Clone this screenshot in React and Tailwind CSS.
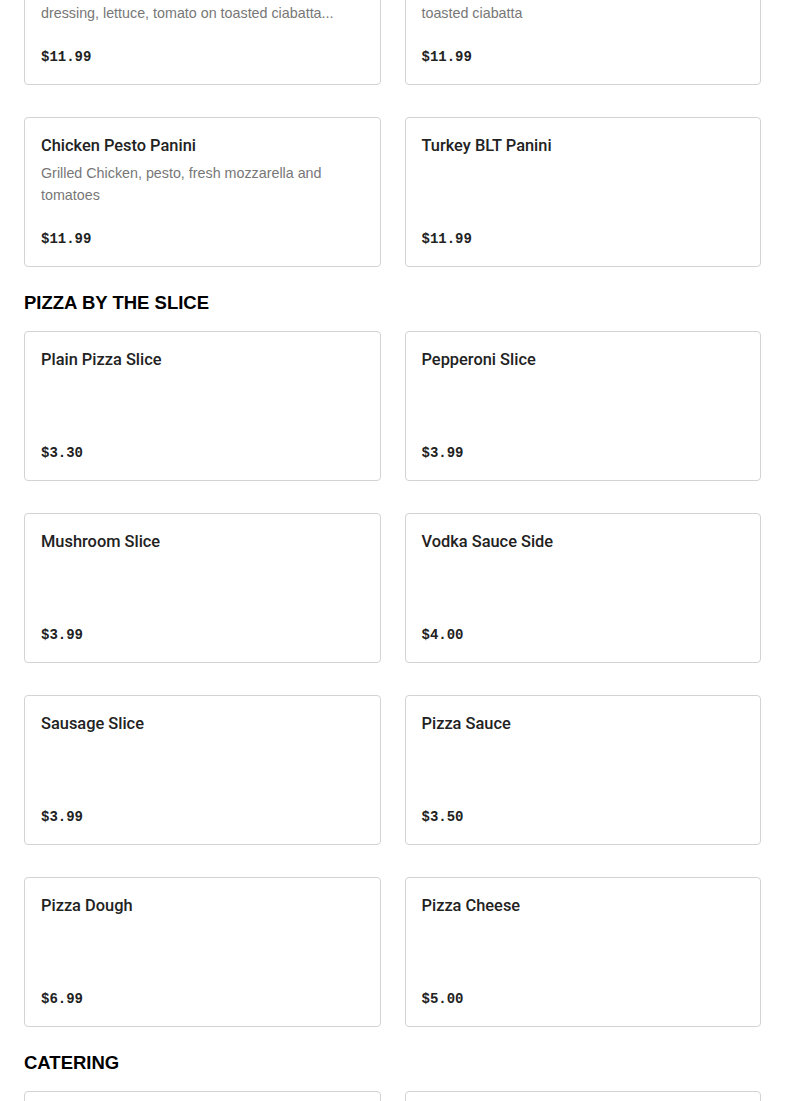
import React from "react";

const panini = [
  {
    name: "Italian Panini",
    desc: "Ham, salami, pepperoni, provolone, Italian\ndressing, lettuce, tomato on toasted ciabatta...",
  },
  {
    name: "Chicken Cutlet Panini",
    desc: "Breaded chicken cutlet, roasted peppers on\ntoasted ciabatta",
  },
  {
    name: "Chicken Pesto Panini",
    desc: "Grilled Chicken, pesto, fresh mozzarella and tomatoes",
  },
  { name: "Turkey BLT Panini" },
].map((p) => ({ ...p, price: "$11.99" }));

const slices = [
  { name: "Plain Pizza Slice", price: "$3.30" },
  { name: "Pepperoni Slice", price: "$3.99" },
  { name: "Mushroom Slice", price: "$3.99" },
  { name: "Vodka Sauce Side", price: "$4.00" },
  { name: "Sausage Slice", price: "$3.99" },
  { name: "Pizza Sauce", price: "$3.50" },
  { name: "Pizza Dough", price: "$6.99" },
  { name: "Pizza Cheese", price: "$5.00" },
];

const catering = [
  { name: "Party Tray Pizza", price: "$45.00" },
  { name: "Garden Salad Tray", price: "$35.00" },
];

const Item = ({ item }) => {
  return (
    <div className="flex h-[150px] flex-col rounded border border-[#d3d3d3] bg-white px-4 pt-4 pb-[15px]">
      <span className="text-[16.4px] font-medium leading-6 text-[#222] font-['Roboto',sans-serif]">
        {item.name}
      </span>
      {item.desc && (
        <span className="mt-1 whitespace-pre-line text-[14.3px] leading-[22px] text-[#777] font-['Liberation_Sans',sans-serif]">
          {item.desc}
        </span>
      )}
      <span className="mt-auto text-[14px] font-bold leading-6 text-[#222] font-['Liberation_Mono',monospace]">
        {item.price}
      </span>
    </div>
  );
};

const Section = ({ title, items }) => {
  return (
    <div>
      {title && (
        <h2 className="mt-6 mb-4 text-[18.5px] font-bold uppercase leading-6 text-black font-['Liberation_Sans',sans-serif]">
          {title}
        </h2>
      )}
      <div className="grid grid-cols-2 gap-x-6 gap-y-8">
        {items.map((item) => (
          <Item key={item.name} item={item} />
        ))}
      </div>
    </div>
  );
};

const App = () => {
  return (
    <div className="h-[1101px] overflow-hidden bg-white">
      <div className="mt-[-65px] px-6 pb-10">
        <Section items={panini} />
        <Section title="Pizza by the slice" items={slices} />
        <Section title="Catering" items={catering} />
      </div>
    </div>
  );
};

export default App;
